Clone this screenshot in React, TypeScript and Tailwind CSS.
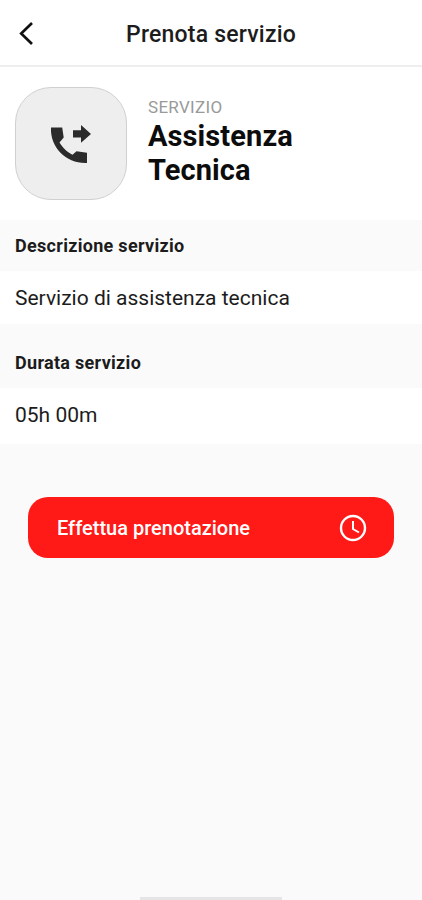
const SectionTitle = ({ title, className }: { title: string; className: string }) => {
  return (
    <div className={`flex items-center bg-[#fafafa] px-[15px] ${className}`}>
      <h3 className="text-[18px] font-bold leading-6 tracking-[0.3px] text-[#1c1c1c]">{title}</h3>
    </div>
  );
};

const App = () => {
  return (
    <div className="flex h-[900px] w-full flex-col overflow-hidden bg-[#fafafa] font-['Roboto',sans-serif] text-[#1c1c1c]">
      {/* Header */}
      <header className="grid h-[67px] shrink-0 grid-cols-[60px_1fr_60px] items-center border-b-2 border-[#eeeeee] bg-white">
        <button className="pl-[18px]" aria-label="Indietro">
          <svg width="16" height="24" viewBox="0 0 16 24" fill="none" stroke="#111111" strokeWidth="2.7">
            <path d="M14 2 L3.2 12.5 L14 23" />
          </svg>
        </button>
        <h1 className="pt-[5px] text-center text-[23px] font-medium tracking-[0.2px]">Prenota servizio</h1>
      </header>

      {/* Service */}
      <section className="flex h-[153px] shrink-0 bg-white pl-[15px] pt-5">
        <div className="flex h-[113px] w-[112px] items-center justify-center rounded-[36px] border border-[#d0d0d0] bg-[#eeeeee]">
          <svg width="44" height="44" viewBox="0 0 44 44" fill="#2b2b2b">
            <path d="M24 8.200h8V3l10 8.900-10 8.900v-5.200h-8z" />
            <path d="M2 5.500h11.200l1.500 10-4.200 5C14 26 17.500 29.500 23.500 32.800l4-3.500 10.500 1.500V41C18 42 1 26 2 5.500z" />
          </svg>
        </div>
        <div className="ml-[21px] pt-2">
          <p className="text-[17px] leading-6 tracking-[0.3px] text-[#999999]">SERVIZIO</p>
          <h2 className="w-[180px] text-[29px] font-bold leading-[34px] tracking-[0.1px] text-[#0c0c0c]">Assistenza Tecnica</h2>
        </div>
      </section>

      {/* Details */}
      <SectionTitle title="Descrizione servizio" className="h-[51px] shrink-0" />
      <p className="flex h-[53px] shrink-0 items-center bg-white px-[15px] pt-[2px] text-[21px]">Servizio di assistenza tecnica</p>
      <SectionTitle title="Durata servizio" className="h-[64px] shrink-0 pt-[14px]" />
      <p className="flex h-[56px] shrink-0 items-center bg-white px-[15px] text-[21px]">05h 00m</p>

      {/* Booking */}
      <button className="mx-7 mt-[53px] flex h-[61px] shrink-0 items-center justify-between rounded-[20px] bg-[#ff1917] pl-[29px] pr-[27px] text-white">
        <span className="text-[20px] font-medium">Effettua prenotazione</span>
        <svg width="28" height="28" viewBox="0 0 28 28" fill="none" stroke="currentColor" strokeWidth="2.4">
          <circle cx="14" cy="14" r="12" />
          <path d="M14 7v8l6 3.500" strokeWidth="2" />
        </svg>
      </button>

      <div className="mx-auto mt-auto h-[3px] w-[142px] shrink-0 bg-[#e5e5e5]" />
    </div>
  );
};
export default App;
